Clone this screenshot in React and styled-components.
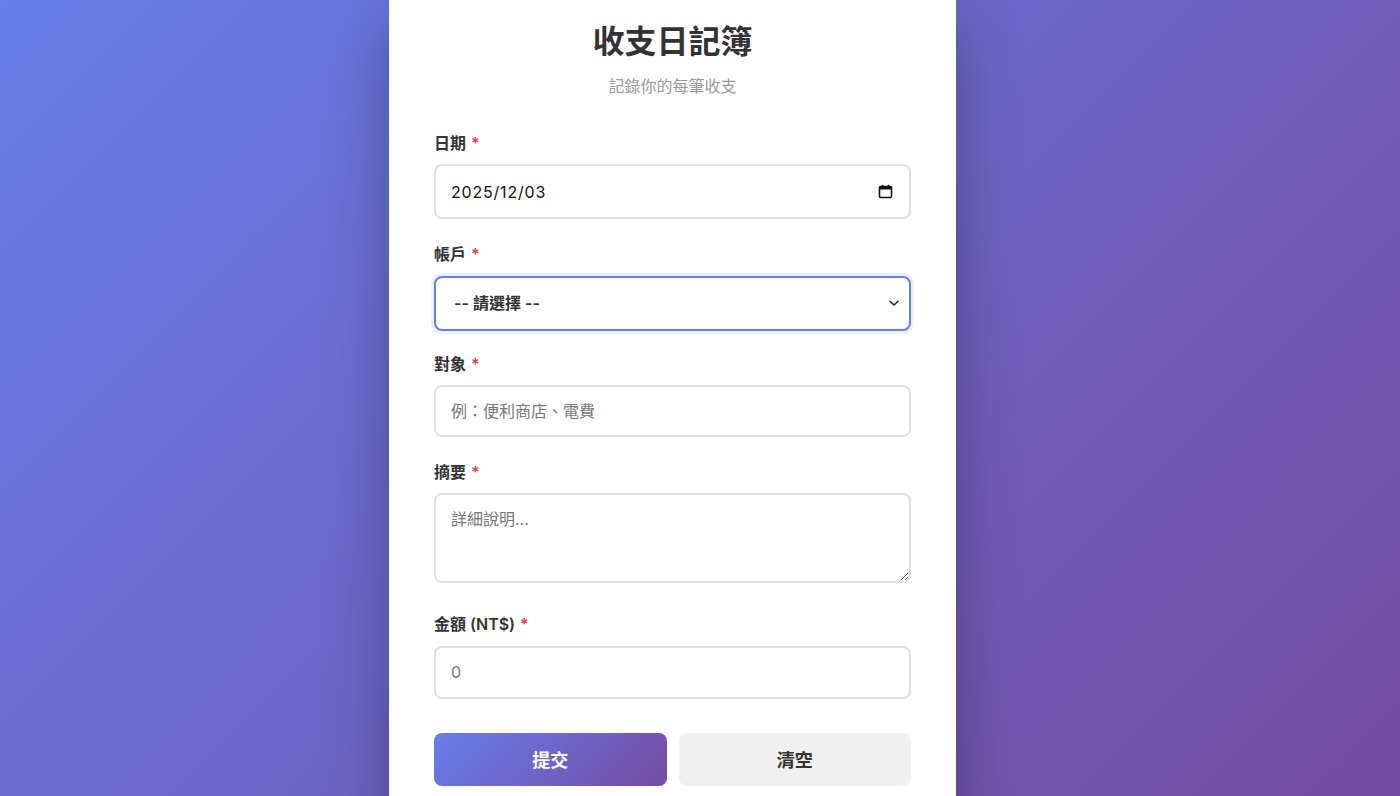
import React from "react";
import styled, { createGlobalStyle } from "styled-components";

const Global = createGlobalStyle`
  html, body { margin: 0; padding: 0; height: 100%; overflow: hidden; }
  body {
    font-family: Inter, "Noto Sans CJK TC", "Noto Sans", sans-serif;
    background: linear-gradient(135deg, #667eea 0%, #764ba2 100%);
  }
  * { box-sizing: border-box; }
`;

const Page = styled.div`
  height: 100vh;
  display: flex;
  justify-content: center;
  align-items: flex-start;
  padding-right: 55px;
  overflow: hidden;
`;

const Card = styled.div`
  width: 567px;
  flex-shrink: 0;
  background: #fff;
  padding: 23px 45px 40px;
  box-shadow: 0 20px 60px rgba(0, 0, 0, 0.3);
`;

const Title = styled.h1`
  margin: 0;
  text-align: center;
  font-size: 32px;
  line-height: 1.2;
  font-weight: 700;
  color: #333;
`;

const Subtitle = styled.p`
  margin: 14px 0 34px;
  text-align: center;
  font-size: 16px;
  line-height: 1.4;
  color: #999;
`;

const Group = styled.div`
  margin-bottom: ${(p) => (p.$mb !== undefined ? p.$mb : 24)}px;
`;

const Label = styled.label`
  display: block;
  font-size: 16px;
  line-height: 1.4;
  font-weight: 600;
  color: #333;
  margin-bottom: 10px;
`;

const Star = styled.span`
  color: #e53e3e;
  margin-left: 5px;
`;

const fieldBase = `
  width: 100%;
  border: 2px solid #e0e0e0;
  border-radius: 8px;
  font-family: Inter, "Noto Sans CJK TC", "Noto Sans", sans-serif;
  font-size: 16px;
  color: #222;
  background: #fff;
  outline: none;
  &::placeholder { color: #777; }
`;

const TextInput = styled.input`
  ${fieldBase}
  display: block;
  height: ${(p) => p.$h || 52}px;
  padding: 0 15px;
  line-height: 20px;
`;

const DateBox = styled.div`
  ${fieldBase}
  height: 55px;
  display: flex;
  align-items: center;
  padding: 0 16px 0 15px;
`;

const DateText = styled.input`
  flex: 1;
  border: none;
  outline: none;
  padding: 0;
  font-family: Inter, "Noto Sans CJK TC", sans-serif;
  font-size: 16px;
  color: #111;
  background: transparent;
  letter-spacing: 0.8px;
`;

const SelectWrap = styled.div`
  position: relative;
`;

const Select = styled.select`
  ${fieldBase}
  display: block;
  height: 55px;
  padding: 0 40px 0 18px;
  appearance: none;
  -webkit-appearance: none;
  font-weight: 600;
  color: #333;
  border-color: #667eea;
  box-shadow: 0 0 0 3px rgba(102, 126, 234, 0.12);
`;

const Chevron = styled.svg`
  position: absolute;
  right: 11px;
  top: 50%;
  transform: translateY(-50%);
  pointer-events: none;
`;

const TextArea = styled.textarea`
  ${fieldBase}
  display: block;
  height: 90px;
  padding: 14px 15px;
  line-height: 20px;
  resize: vertical;
`;

const Buttons = styled.div`
  display: grid;
  grid-template-columns: 1fr 1fr;
  gap: 12px;
  margin-top: 34px;
`;

const Button = styled.button`
  height: 53px;
  border: none;
  border-radius: 8px;
  font-family: Inter, "Noto Sans CJK TC", sans-serif;
  font-size: 18px;
  font-weight: 700;
  cursor: pointer;
  color: ${(p) => (p.$primary ? "#fff" : "#333")};
  background: ${(p) =>
    p.$primary ? "linear-gradient(135deg, #667eea 0%, #764ba2 100%)" : "#f0f0f0"};
`;

export default function App() {
  return (
    <>
      <Global />
      <Page>
        <Card>
          <Title>收支日記簿</Title>
          <Subtitle>記錄你的每筆收支</Subtitle>

          <Group>
            <Label>日期<Star>*</Star></Label>
            <DateBox>
              <DateText type="text" defaultValue="2025/12/03" readOnly />
              <svg width="15" height="15" viewBox="0 0 15 15" fill="none">
                <rect x="1.5" y="2.5" width="12" height="11" rx="1.2" stroke="#111" strokeWidth="1.6" />
                <rect x="1.5" y="2.5" width="12" height="3" fill="#111" />
                <line x1="4.5" y1="0.8" x2="4.5" y2="3" stroke="#111" strokeWidth="1.6" />
                <line x1="10.5" y1="0.8" x2="10.5" y2="3" stroke="#111" strokeWidth="1.6" />
              </svg>
            </DateBox>
          </Group>

          <Group $mb={22}>
            <Label>帳戶<Star>*</Star></Label>
            <SelectWrap>
              <Select defaultValue="">
                <option value="">-- 請選擇 --</option>
              </Select>
              <Chevron width="12" height="12" viewBox="0 0 12 12" fill="none">
                <path d="M2 4.2 L6 8 L10 4.2" stroke="#222" strokeWidth="1.5" strokeLinecap="round" strokeLinejoin="round" />
              </Chevron>
            </SelectWrap>
          </Group>

          <Group>
            <Label>對象<Star>*</Star></Label>
            <TextInput type="text" placeholder="例：便利商店、電費" />
          </Group>

          <Group $mb={30}>
            <Label>摘要<Star>*</Star></Label>
            <TextArea placeholder="詳細說明..." />
          </Group>

          <Group $mb={0}>
            <Label>金額 (NT$)<Star>*</Star></Label>
            <TextInput type="number" placeholder="0" $h={53} />
          </Group>

          <Buttons>
            <Button $primary type="button">提交</Button>
            <Button type="button">清空</Button>
          </Buttons>
        </Card>
      </Page>
    </>
  );
}
